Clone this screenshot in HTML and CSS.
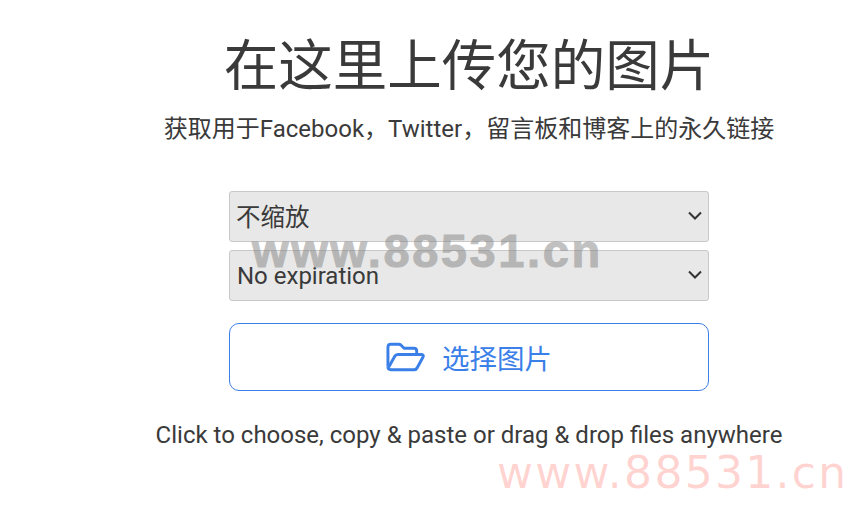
FILE: index.html
```html
<!DOCTYPE html>
<html lang="zh-CN">
<head>
    <meta charset="UTF-8">
    <meta name="viewport" content="width=device-width, initial-scale=1.0">
    <title>上传图片</title>
    <link rel="stylesheet" href="styles.css">
</head>
<body>
    <main class="uploader">
        <h1>在这里上传您的图片</h1>
        <p class="subtitle">获取用于Facebook，Twitter，留言板和博客上的永久链接</p>

        <form class="upload-form">
            <div class="select-wrap">
                <select class="select-box cjk">
                    <option>不缩放</option>
                </select>
                <svg class="chevron" viewBox="0 0 14 9"><path d="M1 1.5l6 6 6-6"/></svg>
            </div>
            <div class="select-wrap">
                <select class="select-box">
                    <option>No expiration</option>
                </select>
                <svg class="chevron" viewBox="0 0 14 9"><path d="M1 1.5l6 6 6-6"/></svg>
            </div>
            <button type="button" class="choose-btn">
                <svg class="folder" viewBox="0 0 40 30">
                    <path d="M2 25V5q0-3 3-3h8q1.500 0 2.500 1l3 3h10q3 0 3 3v4"/>
                    <path d="M2 25q0 3 3 3h24q2 0 3-2l6-11q1-2.500-2-2.500H12q-2 0-3 1.800L3 25"/>
                </svg>
                <span>选择图片</span>
            </button>
        </form>

        <p class="hint">Click to choose, copy &amp; paste or drag &amp; drop files anywhere</p>
    </main>

    <div class="mark mark-grey">www.88531.cn</div>
    <div class="mark mark-pink">www.88531.cn</div>
</body>
</html>
```

FILE: styles.css
```css
* {
    margin: 0;
    padding: 0;
    box-sizing: border-box;
}

body {
    background-color: #fff;
    color: #3a3a3a;
    font-family: Roboto, "Noto Sans CJK SC", sans-serif;
    height: 505px;
    overflow: hidden;
    position: relative;
}

.uploader {
    width: 764px;
    margin-left: 87px;
    padding-top: 27px;
    display: flex;
    flex-direction: column;
    align-items: center;
}

h1 {
    font-size: 54.5px;
    font-weight: 400;
    line-height: 78px;
}

.subtitle {
    font-size: 24px;
    line-height: 34px;
    margin-top: 7px;
}

.upload-form {
    width: 480px;
    margin-top: 45px;
}

.select-wrap {
    position: relative;
    margin-bottom: 8px;
}

.select-box {
    display: block;
    width: 100%;
    height: 51px;
    padding: 0 30px 0 7px;
    appearance: none;
    background-color: #e8e8e8;
    border: 1px solid #c8c8c8;
    border-radius: 3px;
    color: #3a3a3a;
    font-family: inherit;
    font-size: 24px;
}

.select-box.cjk {
    padding: 2px 30px 0 6px;
    font-size: 24.5px;
}

.chevron {
    position: absolute;
    right: 7px;
    top: 20px;
    width: 14px;
    height: 9px;
    fill: none;
    stroke: #333;
    stroke-width: 2;
}

.choose-btn {
    display: flex;
    align-items: center;
    justify-content: center;
    gap: 17px;
    width: 100%;
    height: 68px;
    margin-top: 22px;
    background-color: #fff;
    border: 1px solid #3b80e8;
    border-radius: 10px;
    color: #3b80e8;
    font-family: inherit;
    font-size: 27.5px;
}

.folder {
    width: 39px;
    height: 30px;
    fill: none;
    stroke: #3b80e8;
    stroke-width: 3;
    stroke-linejoin: round;
}

.hint {
    font-size: 24px;
    line-height: 34px;
    margin-top: 27px;
}

.mark {
    position: absolute;
    white-space: nowrap;
    pointer-events: none;
}

.mark-grey {
    left: 252px;
    top: 225px;
    color: #7d7d7d;
    opacity: 0.47;
    font-family: "Liberation Sans", sans-serif;
    font-size: 47px;
    font-weight: 700;
    letter-spacing: 2.6px;
    line-height: 52px;
    -webkit-text-stroke: 1px #7d7d7d;
}

.mark-pink {
    left: 497px;
    top: 445px;
    color: rgba(255, 80, 70, 0.25);
    font-family: "DejaVu Sans", sans-serif;
    font-size: 44px;
    line-height: 56px;
    letter-spacing: 2.3px;
}
```
